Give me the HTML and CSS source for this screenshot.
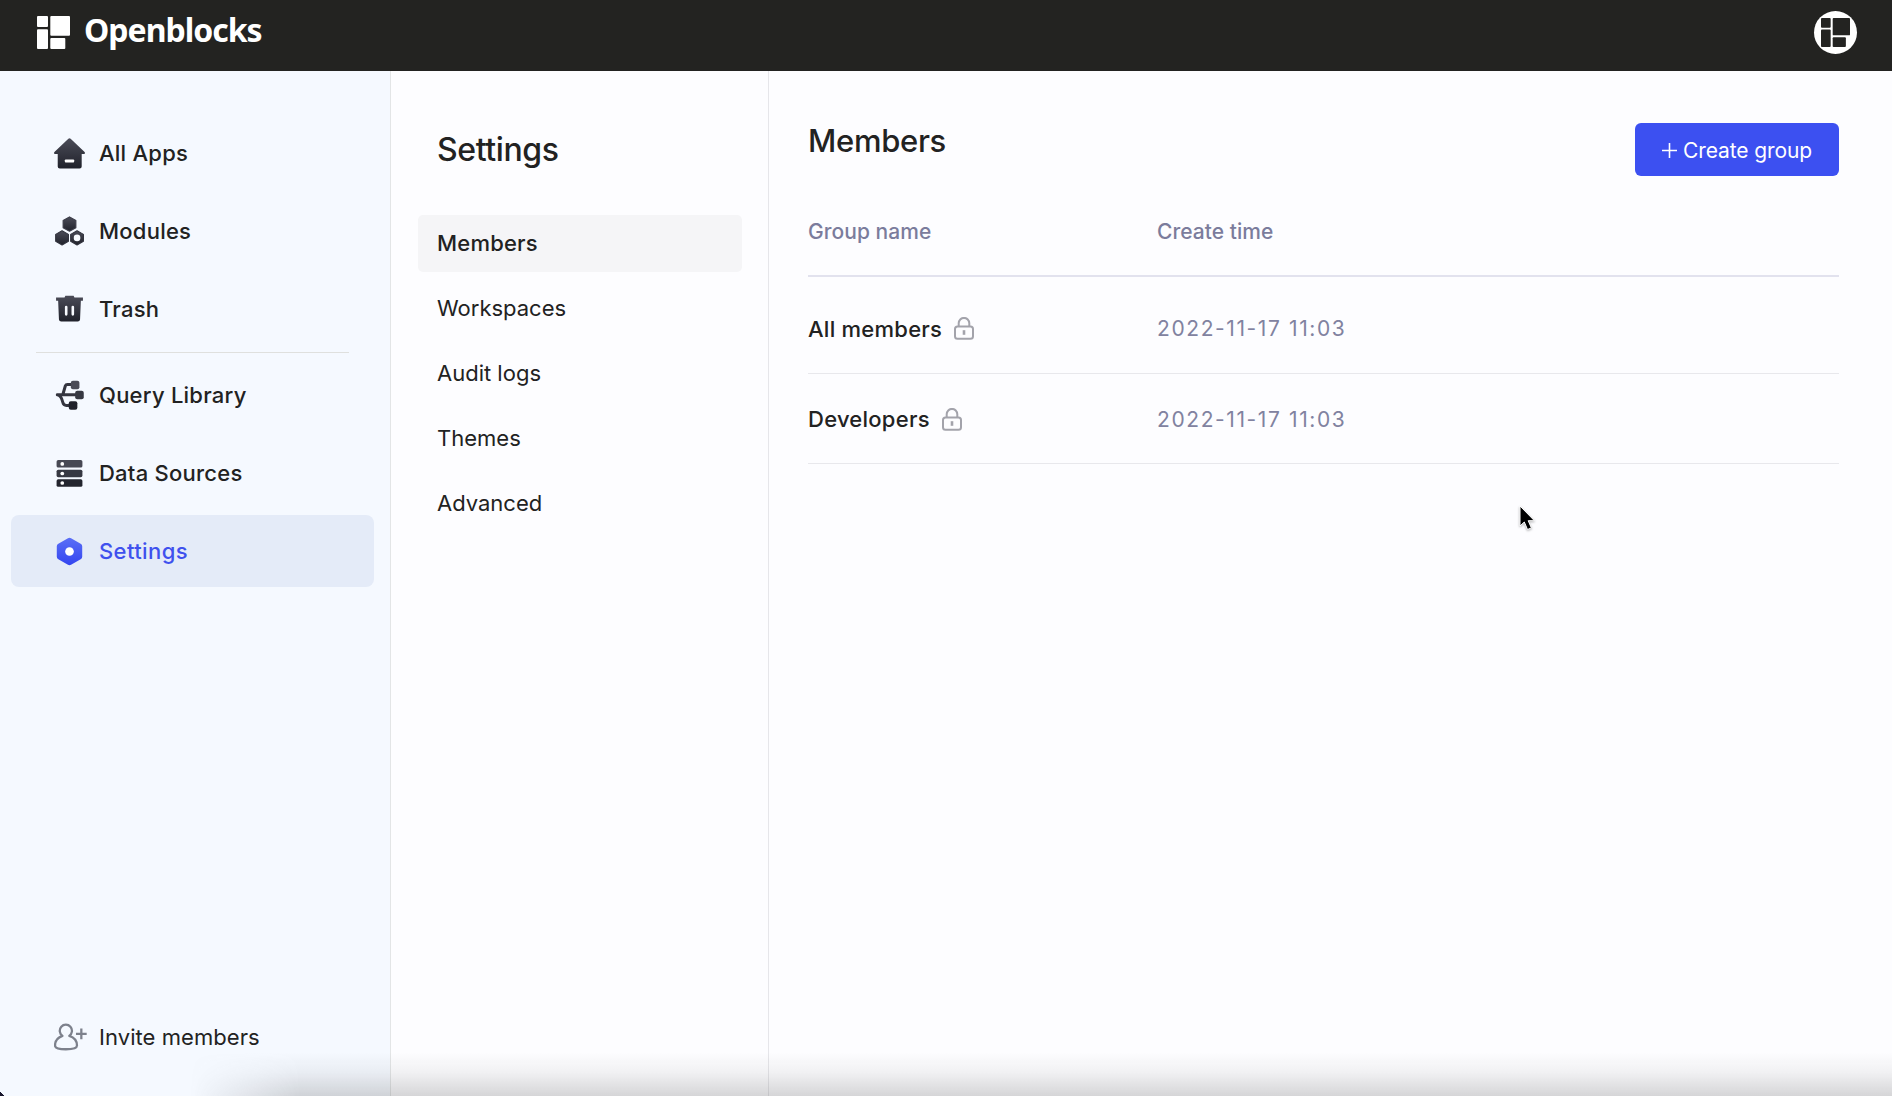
FILE: index.html
```html
<!DOCTYPE html>
<html lang="en">
<head>
<meta charset="utf-8">
<title>Openblocks</title>
<link rel="stylesheet" href="styles.css">
</head>
<body>
<svg width="0" height="0" class="defs" aria-hidden="true">
  <defs>
    <linearGradient id="ink" x1="0" y1="0" x2="0" y2="1"><stop offset="0" stop-color="#4b4c58"/><stop offset="1" stop-color="#20222b"/></linearGradient>
    <linearGradient id="blue" x1="0" y1="0" x2="0" y2="1"><stop offset="0" stop-color="#5a6ef6"/><stop offset="1" stop-color="#3446f0"/></linearGradient>
    <symbol id="blocks" viewBox="0 0 33 33"><rect width="11" height="11" rx="1"/><rect x="13.3" width="19.7" height="19.7" rx="1"/><rect y="13.2" width="11" height="19.8" rx="1"/><rect x="13.3" y="22" width="15" height="11" rx="1"/></symbol>
    <symbol id="lock" viewBox="0 0 20 23"><g fill="none" stroke="#a3a3ab" stroke-width="2"><rect x="1" y="9.5" width="18" height="12.3" rx="2.5"/><path d="M4.7 9.5V6.2a5.3 5.3 0 0 1 10.6 0v3.3"/><path d="M10 13.2v4.6" stroke-width="2.6"/></g></symbol>
  </defs>
</svg>
<div class="app">
  <header class="topbar">
    <div class="brand">
      <svg class="brand-mark"><use href="#blocks"/></svg>
      <span class="brand-name">Openblocks</span>
    </div>
    <div class="avatar"><svg class="avatar-mark"><use href="#blocks"/></svg></div>
  </header>
  <div class="body">
    <nav class="sidebar">
      <a class="nav-item"><svg class="icon" viewBox="0 0 30 30"><path fill="url(#ink)" d="M13.9.7a1.6 1.6 0 0 1 2.2 0L29.6 13.6c.7.8.3 1.9-.8 1.9H26.800V27.500a2 2 0 0 1-2 2H5.600a2 2 0 0 1-2-2V15.500H1.200c-1.100 0-1.500-1.100-.8-1.900Z"/><rect x="10.500" y="20.700" width="9" height="3" rx=".8" fill="#fff"/></svg>All Apps</a>
      <a class="nav-item"><svg class="icon" viewBox="0 0 30 30"><g fill="url(#ink)"><path d="M15 .8l6.200 3.500v7L15 14.800l-6.200-3.500v-7Z" stroke="#3c3d48" stroke-linejoin="round"/><path d="M7.800 14.300l6.200 3.500v6.700l-6.200 3.500-6.200-3.500v-6.700Z" stroke="#30323c" stroke-linejoin="round"/><path d="M22.300 14.300l6.200 3.500v6.700l-6.200 3.500-6.200-3.500v-6.700Z" stroke="#30323c" stroke-linejoin="round"/></g><circle cx="22.300" cy="21.200" r="3.200" fill="#f8fbff"/></svg>Modules</a>
      <a class="nav-item"><svg class="icon" viewBox="0 0 30 30"><path fill="url(#ink)" d="M10.200 3.500l.8-1.900h8l.8 1.900H28v3h-2l-.8 18.200a2.200 2.200 0 0 1-2.200 2H7a2.200 2.200 0 0 1-2.200-2L4 6.500H2v-3Z"/><path d="M11.800 12.500v7.200M18.200 12.500v7.200" stroke="#f8fbff" stroke-width="2.500" stroke-linecap="round"/></svg>Trash</a>
      <div class="rule"></div>
      <a class="nav-item"><svg class="icon" viewBox="0 0 30 30"><path d="M3.200 14.300H22M8.500 14.300L11 5.600Q11.500 4.300 13 4.300H19M3.200 14.300Q7 15 8.500 21.500Q9.200 24.600 12 24.600H17" fill="none" stroke="#34353f" stroke-width="2.900" stroke-linecap="round"/><rect x="16.300" y=".7" width="8.300" height="8.300" rx="2" fill="#4a4b56"/><rect x="20.500" y="10.300" width="8.300" height="8.300" rx="2" fill="#363842"/><rect x="14.300" y="20.600" width="8.300" height="8.300" rx="2" fill="#20222b"/></svg>Query Library</a>
      <a class="nav-item"><svg class="icon" viewBox="0 0 30 30"><rect x="2.500" y="2" width="25" height="7.300" rx="1.600" fill="#474954"/><rect x="2.500" y="11.300" width="25" height="7.300" rx="1.600" fill="#363842"/><rect x="2.500" y="20.600" width="25" height="7.300" rx="1.600" fill="#23252e"/><g fill="#fff"><circle cx="8" cy="5.700" r="1.800"/><circle cx="8" cy="15" r="1.800"/><circle cx="8" cy="24.200" r="1.800"/></g></svg>Data Sources</a>
      <a class="nav-item active"><svg class="icon" viewBox="0 0 30 30"><path fill="url(#blue)" d="M13.500 2.200a3 3 0 0 1 3 0l9.300 5.200a3 3 0 0 1 1.500 2.600v10a3 3 0 0 1-1.500 2.600l-9.300 5.200a3 3 0 0 1-3 0l-9.300-5.200A3 3 0 0 1 2.700 20V10a3 3 0 0 1 1.500-2.600Z"/><circle cx="15" cy="15" r="4.200" fill="#fff"/></svg>Settings</a>
      <a class="nav-item invite"><svg class="icon invite-icon" viewBox="0 0 32 30"><g fill="none" stroke="#7d818c" stroke-width="2.200"><path d="M8.200 13.400a5.900 5.900 0 1 1 6.600 0c4.700 1.500 7.500 5 7.500 9.400 0 2.400-4.500 3.600-10.800 3.600S1 25.200 1 22.800c0-4.400 2.800-7.900 7.200-9.400Z" stroke-linejoin="round"/><path d="M26.500 6.300v10.400M21.300 11.500h10.400"/></g></svg>Invite members</a>
    </nav>
    <aside class="settings">
      <h2 class="settings-title">Settings</h2>
      <a class="tab selected">Members</a>
      <a class="tab">Workspaces</a>
      <a class="tab">Audit logs</a>
      <a class="tab">Themes</a>
      <a class="tab">Advanced</a>
    </aside>
    <main class="content">
      <div class="content-head">
        <h1 class="title">Members</h1>
        <button class="create"><svg class="plus" viewBox="0 0 15 15"><path d="M7.500 0v15M0 7.500h15" stroke="#fff" stroke-width="1.600"/></svg>Create group</button>
      </div>
      <div class="row head"><span>Group name</span><span>Create time</span></div>
      <div class="row first"><span class="name">All members<svg class="lock"><use href="#lock"/></svg></span><span class="time">2022-11-17 11:03</span></div>
      <div class="row"><span class="name">Developers<svg class="lock"><use href="#lock"/></svg></span><span class="time">2022-11-17 11:03</span></div>
    </main>
  </div>
  <div class="edge-shadow"></div>
  <div class="corner"></div>
  <svg class="cursor" viewBox="0 0 18 28"><path d="M2 2v20l4.300-4 3.200 7.500 3.900-1.600-3.200-7.200h6.200Z" fill="#000" stroke="#fff"/></svg>
</div>
</body>
</html>
```
FILE: styles.css
```css
* { box-sizing: border-box; }
body { margin: 0; font-family: Inter, "Liberation Sans", sans-serif; color: #222222; background: #fdfdff; }
h1, h2 { margin: 0; font-weight: 500; }
.defs { position: absolute; }
.app { position: relative; height: 1096px; display: flex; flex-direction: column; overflow: hidden; }

.topbar { height: 71px; flex: none; background: #232321; display: flex; justify-content: space-between; padding: 11px 35px 0 37px; }
.brand { display: flex; align-items: flex-start; gap: 14px; }
.brand-mark { width: 33px; height: 33px; margin-top: 5px; fill: #ffffff; }
.brand-name { font: 700 32px/38px "Noto Sans", sans-serif; letter-spacing: -1px; color: #ffffff; }
.avatar { width: 43px; height: 43px; border-radius: 50%; background: #ffffff; display: flex; align-items: center; justify-content: center; }
.avatar-mark { width: 29px; height: 29px; fill: #232321; }

.body { flex: 1; display: flex; min-height: 0; }
.sidebar { width: 391px; flex: none; background: #f5f9ff; border-right: 1px solid #e3e5e6; padding: 46px 16px 23px 11px; display: flex; flex-direction: column; gap: 6px; }
.nav-item { height: 72px; flex: none; padding-left: 43px; display: flex; align-items: center; gap: 14px; border-radius: 8px; font-size: 22px; font-weight: 500; letter-spacing: .24px; }
.nav-item.active { background: #e4ebf8; color: #3f51ee; letter-spacing: .4px; }
.icon { width: 31px; height: 31px; flex: none; }
.rule { height: 1px; margin: 1px 15px 0 25px; width: 313px; background: #dfe0de; }
.invite { margin-top: auto; font-weight: 400; letter-spacing: .06px; }
.invite-icon { width: 33px; margin-right: -2px; }

.settings { width: 378px; flex: none; border-right: 1px solid #e6e6ea; padding: 54px 26px 0 27px; display: flex; flex-direction: column; gap: 8px; }
.settings-title { font-size: 32px; line-height: 50px; letter-spacing: -.4px; padding-left: 19px; margin-bottom: 32px; }
.tab { height: 57px; padding: 0 0 2px 19px; display: flex; align-items: center; font-size: 22px; border-radius: 5px; }
.tab.selected { background: #f5f5f7; font-weight: 500; letter-spacing: .2px; }

.content { flex: 1; padding: 52px 53px 0 39px; }
.content-head { display: flex; justify-content: space-between; align-items: flex-start; height: 79px; }
.title { font-size: 31px; line-height: 36px; letter-spacing: -.3px; }
.create { margin: 0; height: 53px; width: 204px; padding: 1px 0 0; border: 0; border-radius: 6px; background: #3c50f1; color: #ffffff; font: 400 21px Inter, "Liberation Sans", sans-serif; letter-spacing: -.1px; display: flex; align-items: center; justify-content: center; gap: 6px; }
.plus { width: 15px; height: 15px; }
.row { display: grid; grid-template-columns: 349px 1fr; align-items: center; height: 90px; padding-top: 1px; border-bottom: 1px solid #e8e8ec; font-size: 22px; }
.row.head { height: 75px; padding: 0 0 14px; border-bottom: 2px solid #e2e2ee; color: #7b7c9c; font-size: 21px; font-weight: 500; letter-spacing: .05px; }
.row.first { height: 97px; padding-top: 7px; }
.name { display: flex; align-items: center; gap: 12px; font-weight: 500; letter-spacing: .25px; }
.lock { width: 20px; height: 23px; }
.time { color: #8182a0; font-size: 21px; letter-spacing: 1.6px; }

.edge-shadow { position: absolute; left: 190px; right: 0; bottom: 0; height: 44px; background: linear-gradient(to bottom, transparent, rgba(90, 90, 90, .07) 45%, rgba(90, 90, 90, .24)); -webkit-mask-image: linear-gradient(to right, transparent, #000 110px); mask-image: linear-gradient(to right, transparent, #000 110px); pointer-events: none; }
.corner { position: absolute; left: 0; bottom: 0; width: 4px; height: 4px; background: linear-gradient(45deg, #18162c 50%, transparent 50%); }
.cursor { position: absolute; left: 1518px; top: 504px; width: 18px; height: 28px; filter: drop-shadow(0 1px 1px rgba(0, 0, 0, .3)); }
```
